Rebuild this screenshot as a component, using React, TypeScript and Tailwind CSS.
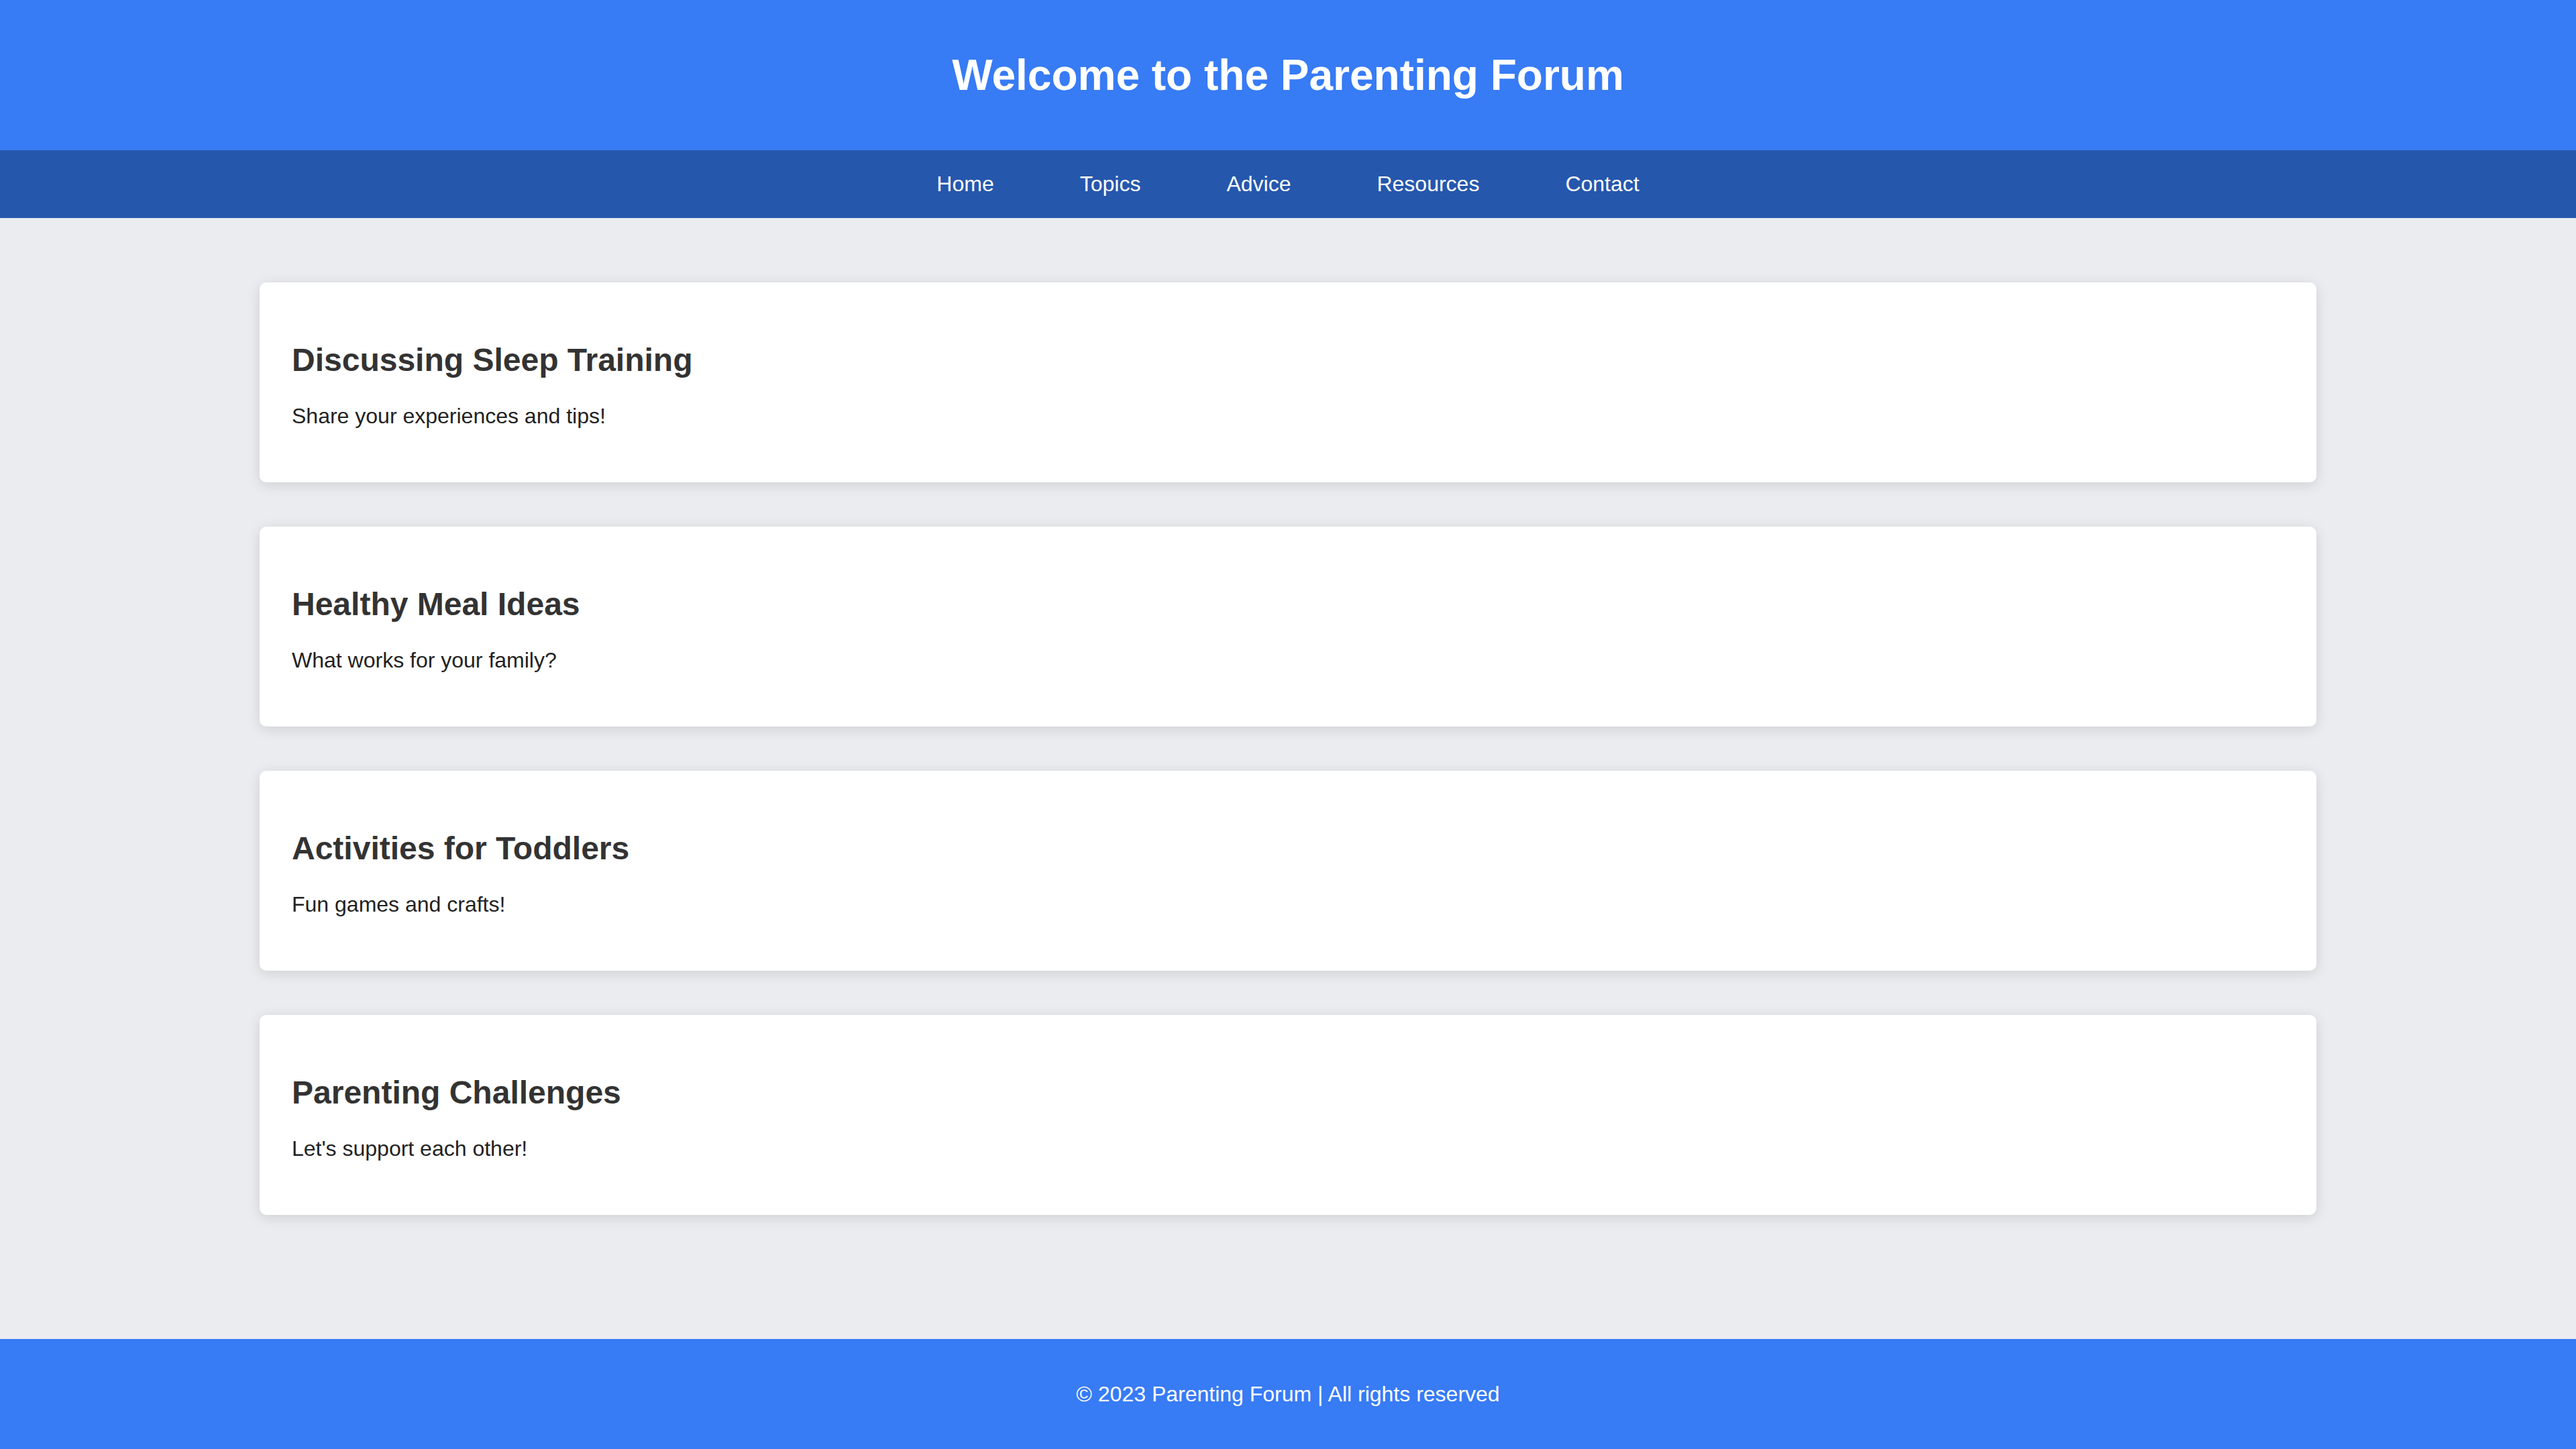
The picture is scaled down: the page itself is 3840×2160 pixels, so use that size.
const topics = [
  { title: "Discussing Sleep Training", desc: "Share your experiences and tips!" },
  { title: "Healthy Meal Ideas", desc: "What works for your family?" },
  { title: "Activities for Toddlers", desc: "Fun games and crafts!" },
  { title: "Parenting Challenges", desc: "Let's support each other!" },
];

const links = ["Home", "Topics", "Advice", "Resources", "Contact"];

export default function App() {
  return (
    <div className="min-h-screen flex flex-col bg-[#ebecf0] text-[#333] font-['Liberation_Sans',Arial,sans-serif]">
      {/* Header */}
      <header className="h-[224px] flex items-center justify-center bg-[#377bf5]">
        <h1 className="text-[64px] leading-[74px] font-bold text-white">
          Welcome to the Parenting Forum
        </h1>
      </header>

      {/* Nav */}
      <nav className="h-[101px] flex items-center justify-center gap-[128px] bg-[#2557ad]">
        {links.map((l) => (
          <a key={l} href="#" className="text-[32px] leading-[37px] text-white">
            {l}
          </a>
        ))}
      </nav>

      {/* Topics */}
      <main className="flex-1 pt-[96px] pb-[96px]">
        <div className="w-[3066px] mx-auto flex flex-col gap-[66px]">
          {topics.map((t) => (
            <div
              key={t.title}
              className="bg-white rounded-[10px] px-[48px] py-[48px] shadow-[0_4px_20px_rgba(0,0,0,0.12)]"
            >
              <h2 className="mt-[40px] text-[48px] leading-[55px] font-bold text-[#333]">
                {t.title}
              </h2>
              <p className="mt-[38px] mb-[32px] text-[32px] leading-[37px] text-[#222]">
                {t.desc}
              </p>
            </div>
          ))}
        </div>
      </main>

      {/* Footer */}
      <footer className="h-[164px] flex items-center justify-center bg-[#377bf5]">
        <p className="text-[32px] leading-[37px] text-white">
          © 2023 Parenting Forum | All rights reserved
        </p>
      </footer>
    </div>
  );
}
